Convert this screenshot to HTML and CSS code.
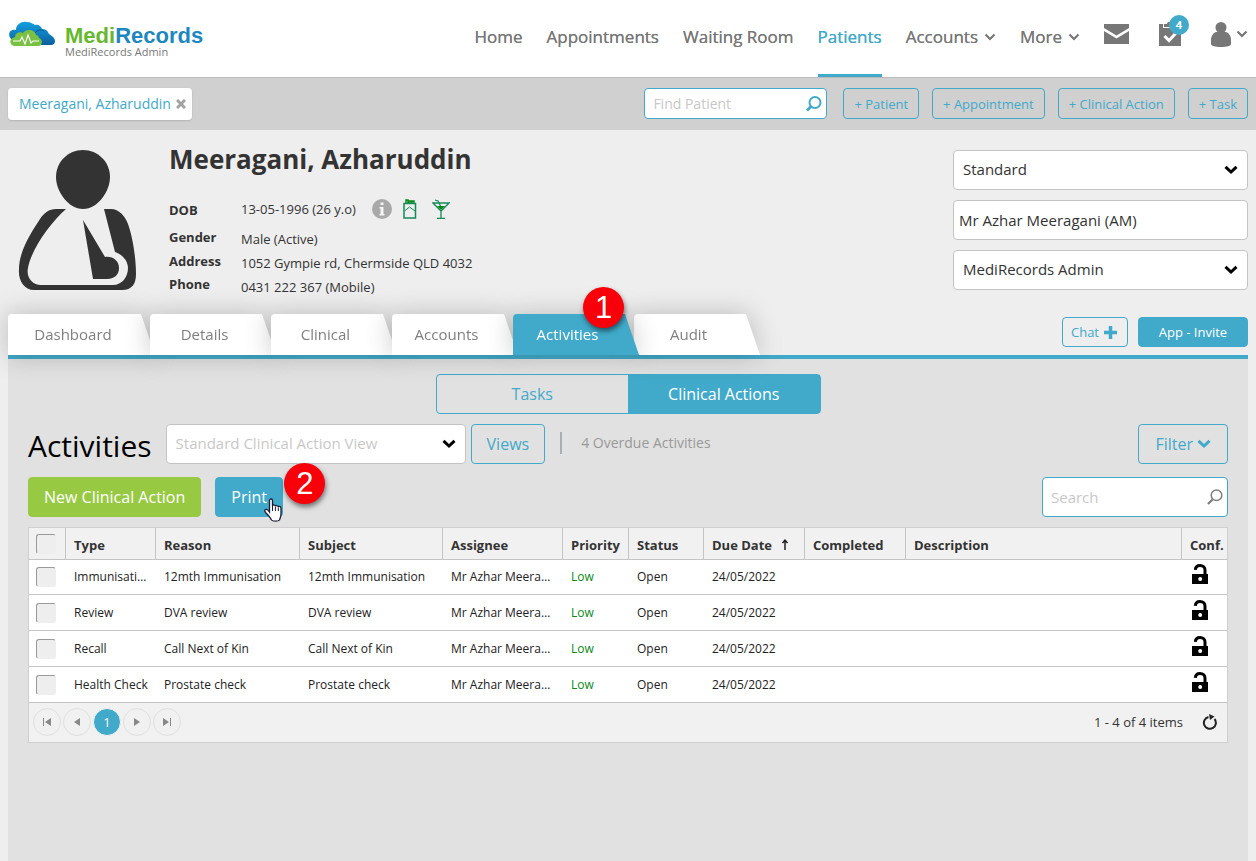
FILE: index.html
```html
<!DOCTYPE html>
<html lang="en">
<head>
<meta charset="utf-8">
<meta name="viewport" content="width=device-width, initial-scale=1">
<title>MediRecords - Patient activities</title>
<link rel="stylesheet" href="styles.css">
</head>
<body>
<svg class="defs" aria-hidden="true">
  <symbol id="chevron" viewBox="0 0 12 8"><path d="M1.5 1.5 6 6l4.500-4.500" fill="none" stroke="currentColor" stroke-width="2.200"/></symbol>
  <symbol id="chevron-bold" viewBox="0 0 14 10"><path d="M1.500 1.800 7 7l5.500-5.200" fill="none" stroke="currentColor" stroke-width="3"/></symbol>
  <symbol id="unlock" viewBox="0 0 16 20"><path d="M0 10h16v10H0z" fill="currentColor"/><path d="M3.300 5.800C3.500 3 5.200 1.500 8 1.500s5 1.600 5 4.500v5" fill="none" stroke="currentColor" stroke-width="3"/><circle cx="8.200" cy="15" r="2" fill="#fff"/></symbol>
</svg>

<header class="topbar">
  <a class="brand" href="#">
    <svg class="brand-mark" viewBox="0 0 48 26" aria-hidden="true">
      <defs>
        <linearGradient id="cloud-blue" x1="0" y1="0" x2="0" y2="1"><stop offset="0" stop-color="#139fe0"/><stop offset="1" stop-color="#0d5f9d"/></linearGradient>
      </defs>
      <path d="M3 18C-1 13 2 8 8 9 8 3 14 0 19 1c4 0 6 2 8 3 3-1 6 1 7 4 5 0 6 3 7 5 4 2 6 5 6 7 0 3-2 4-4 4H15z" fill="url(#cloud-blue)"/>
      <path d="M27 12c2-3 6-4 9-2" stroke="#0b4f8c" fill="none"/>
      <path d="M6 25c-5-1-5-8 1-9 0-4 5-6 8-4 4-5 12-3 13 2 1 0 3 1 3 3 4 1 4 8-1 8z" fill="#7ac043"/>
      <path d="M5 20h7l2-4 3 7 3-9 3 8 2-2h6" fill="none" stroke="#fff" stroke-width="1.100"/>
    </svg>
    <span class="brand-text">
      <span class="brand-name"><span class="brand-green">Medi</span>Records</span>
      <span class="brand-sub">MediRecords Admin</span>
    </span>
  </a>
  <nav class="nav" aria-label="Main">
    <a href="#">Home</a>
    <a href="#">Appointments</a>
    <a href="#">Waiting Room</a>
    <a class="active" href="#">Patients</a>
    <a href="#">Accounts <svg class="chev" aria-hidden="true"><use href="#chevron"/></svg></a>
    <a href="#">More <svg class="chev" aria-hidden="true"><use href="#chevron"/></svg></a>
    <a class="nav-mail" href="#" aria-label="Messages"><svg width="25" height="20" viewBox="0 0 25 20"><path d="M0 0h25v4l-12.500 7.500L0 4zM0 7l12.500 7.500L25 7v13H0z" fill="currentColor"/></svg></a>
    <a class="nav-tasks" href="#" aria-label="Tasks"><svg width="22" height="24" viewBox="0 0 22 24"><path d="M0 2h4v4h14V2h4v22H0z" fill="currentColor"/><path d="M5 5V2h3c0-3 6-3 6 0h3v3z" fill="currentColor"/><path d="m5.500 14 4.500 4.500 7-7.500" fill="none" stroke="#fff" stroke-width="3"/></svg><span class="count">4</span></a>
    <a class="nav-user" href="#" aria-label="Account"><svg width="20" height="25" viewBox="0 0 20 25"><circle cx="10" cy="5.500" r="5.500" fill="currentColor"/><path d="M5 10h10c3 1 5 4 5 8v4c0 2-4 3-10 3S0 24 0 22v-4c0-4 2-7 5-8z" fill="currentColor"/></svg><svg class="chev" aria-hidden="true"><use href="#chevron"/></svg></a>
  </nav>
</header>

<div class="toolbar">
  <div class="chip"><a href="#">Meeragani, Azharuddin</a><button type="button" aria-label="Close"><svg width="10" height="10" viewBox="0 0 10 10"><path d="m1 1 8 8M9 1 1 9" stroke="#a3a3a3" stroke-width="3"/></svg></button></div>
  <div class="toolbar-actions">
    <div class="field find"><input type="search" placeholder="Find Patient" aria-label="Find Patient"><svg width="16" height="16" viewBox="0 0 16 16" aria-hidden="true"><circle cx="9" cy="6.500" r="5.500" fill="none" stroke="currentColor" stroke-width="2"/><path d="m5 10.500-4 4" stroke="currentColor" stroke-width="3"/></svg></div>
    <button type="button" class="btn btn-small">+ Patient</button>
    <button type="button" class="btn btn-small">+ Appointment</button>
    <button type="button" class="btn btn-small">+ Clinical Action</button>
    <button type="button" class="btn btn-small">+ Task</button>
  </div>
</div>

<main>
  <section class="patient">
    <svg class="avatar" viewBox="0 0 120 142" role="img" aria-label="Patient">
      <g fill="#333">
        <path d="M65 0c15 0 27 12 27 27 0 14-12 32-27 32S38 41 38 27C38 12 50 0 65 0z"/>
        <path d="M48 59H38c-7 0-12 4-16 10C15 80 1 100 1 119c-1 11 5 21 15 21h88c10 0 14-6 14-16 0-15-3-36-8-50-3-8-9-15-17-15h-7l11 43c8 3 13 9 13 16 0 9-6 17-15 17H23c-9 0-15-8-13-17 3-18 22-45 38-59z"/>
        <path d="m65 70 22 37c8-1 14 4 14 11s-5 11-12 11H75z"/>
      </g>
    </svg>
    <div class="patient-info">
      <h1>Meeragani, Azharuddin</h1>
      <dl>
        <dt>DOB</dt>
        <dd class="dob">13-05-1996 (26 y.o)
          <svg class="ico-info" width="20" height="20" viewBox="0 0 20 20" aria-hidden="true"><circle cx="10" cy="10" r="10" fill="#a9a9a9"/><path d="M8.500 3.500h3v2.500h-3zM7.500 8h4v7h1v1.500h-5V15h1V9.500h-1z" fill="#f4f4f4"/></svg>
          <svg class="ico-smoke" width="14" height="20" viewBox="0 0 14 20" aria-hidden="true"><path d="M3 5V1h2v3m1 0V2h2v2m1 0V2h2v3" fill="none" stroke="#008a14" stroke-width="1.500"/><path d="M1 4.500h11.500V19H1z" fill="none" stroke="#148a5a" stroke-width="1.500"/><path d="m1.500 12 5-4 5.500 4" fill="none" stroke="#148a5a"/></svg>
          <svg class="ico-drink" width="18" height="20" viewBox="0 0 18 20" aria-hidden="true"><path d="M1 4h16L9 12zM9 11v8M5 19.500h8M3 1l3 1 3 6" fill="none" stroke="#148a5a" stroke-width="1.300"/><path d="M5 7h8l-4 4z" fill="#008a14"/></svg>
        </dd>
        <dt>Gender</dt><dd>Male (Active)</dd>
        <dt>Address</dt><dd>1052 Gympie rd, Chermside QLD 4032</dd>
        <dt>Phone</dt><dd>0431 222 367 (Mobile)</dd>
      </dl>
    </div>
    <div class="patient-side">
      <div class="select"><select aria-label="Billing type"><option>Standard</option></select><svg aria-hidden="true"><use href="#chevron-bold"/></svg></div>
      <input class="plain" type="text" value="Mr Azhar Meeragani (AM)" aria-label="Practitioner">
      <div class="select"><select aria-label="Practice"><option>MediRecords Admin</option></select><svg aria-hidden="true"><use href="#chevron-bold"/></svg></div>
    </div>
  </section>

  <div class="tabs-row">
    <nav class="tabs" aria-label="Patient record">
      <a class="tab tab-first" href="#"><span>Dashboard</span></a>
      <a class="tab" href="#"><span>Details</span></a>
      <a class="tab" href="#"><span>Clinical</span></a>
      <a class="tab" href="#"><span>Accounts</span></a>
      <div class="tab-holder">
        <a class="tab tab-active" href="#"><span>Activities</span></a>
        <b class="step step-one">1</b>
      </div>
      <a class="tab" href="#"><span>Audit</span></a>
    </nav>
    <div class="tabs-actions">
      <button type="button" class="btn btn-chat">Chat <svg width="13" height="13" viewBox="0 0 13 13" aria-hidden="true"><path d="M6.500 0v13M0 6.500h13" stroke="currentColor" stroke-width="3.500"/></svg></button>
      <button type="button" class="btn btn-fill btn-invite">App - Invite</button>
    </div>
  </div>

  <section class="panel">
    <div class="toggle">
      <button type="button">Tasks</button>
      <button type="button" class="on" aria-pressed="true">Clinical Actions</button>
    </div>

    <div class="row row-views">
      <h2>Activities</h2>
      <div class="select view-select"><select aria-label="View"><option>Standard Clinical Action View</option></select><svg aria-hidden="true"><use href="#chevron-bold"/></svg></div>
      <button type="button" class="btn btn-large btn-views">Views</button>
      <p class="overdue">4 Overdue Activities</p>
      <button type="button" class="btn btn-large btn-filter">Filter <svg aria-hidden="true"><use href="#chevron-bold"/></svg></button>
    </div>

    <div class="row row-actions">
      <button type="button" class="btn btn-large btn-green">New Clinical Action</button>
      <div class="print">
        <button type="button" class="btn btn-large btn-fill">Print</button>
        <svg class="cursor" width="18" height="24" viewBox="0 0 18 24" aria-hidden="true"><path d="M5.500 14V2.500c0-2 3-2 3 0V8c0-1.500 3-1.500 3 .5 0-1.500 2.800-1.300 2.800.7 0-1.300 2.700-1 2.700 1V16c0 3-1 4-1.500 6-1 1.500-7 1.500-8 0-1-2-2-3-4-5.500C1 14 0 12.500 1.500 11.500c1.500-.7 3 1 4 2.500z" fill="#fff" stroke="#1b1b33" stroke-width="1.300"/><path d="M8.500 8v5M11.400 9v4M14.300 9.500V13" stroke="#1b1b33"/></svg>
        <b class="step step-two">2</b>
      </div>
      <div class="field search"><input type="search" placeholder="Search" aria-label="Search"><svg width="16" height="16" viewBox="0 0 16 16" aria-hidden="true"><circle cx="9.500" cy="6.300" r="5.300" fill="none" stroke="currentColor" stroke-width="1.500"/><path d="m5.500 10.500-4.500 4.500" stroke="currentColor" stroke-width="2.300"/></svg></div>
    </div>

    <div class="grid">
      <table>
        <colgroup><col class="c-check"><col class="c-type"><col class="c-reason"><col class="c-subject"><col class="c-assignee"><col class="c-priority"><col class="c-status"><col class="c-date"><col class="c-date"><col><col class="c-conf"></colgroup>
        <thead>
          <tr><th><input type="checkbox" aria-label="Select all"></th><th>Type</th><th>Reason</th><th>Subject</th><th>Assignee</th><th>Priority</th><th>Status</th><th>Due Date <svg class="sort" width="8" height="11" viewBox="0 0 8 11" aria-hidden="true"><path d="M4 1v10M1.500 4 4 1.200 6.500 4" fill="none" stroke="#222" stroke-width="1.500"/></svg></th><th>Completed</th><th>Description</th><th>Conf.</th></tr>
        </thead>
        <tbody>
          <tr><td><input type="checkbox" aria-label="Select Immunisation"></td><td>Immunisation</td><td>12mth Immunisation</td><td>12mth Immunisation</td><td>Mr Azhar Meeragani</td><td class="low">Low</td><td>Open</td><td>24/05/2022</td><td></td><td></td><td><svg class="lock"><use href="#unlock"/></svg></td></tr>
          <tr><td><input type="checkbox" aria-label="Select Review"></td><td>Review</td><td>DVA review</td><td>DVA review</td><td>Mr Azhar Meeragani</td><td class="low">Low</td><td>Open</td><td>24/05/2022</td><td></td><td></td><td><svg class="lock"><use href="#unlock"/></svg></td></tr>
          <tr><td><input type="checkbox" aria-label="Select Recall"></td><td>Recall</td><td>Call Next of Kin</td><td>Call Next of Kin</td><td>Mr Azhar Meeragani</td><td class="low">Low</td><td>Open</td><td>24/05/2022</td><td></td><td></td><td><svg class="lock"><use href="#unlock"/></svg></td></tr>
          <tr><td><input type="checkbox" aria-label="Select Health Check"></td><td>Health Check</td><td>Prostate check</td><td>Prostate check</td><td>Mr Azhar Meeragani</td><td class="low">Low</td><td>Open</td><td>24/05/2022</td><td></td><td></td><td><svg class="lock"><use href="#unlock"/></svg></td></tr>
        </tbody>
      </table>
      <div class="pager">
        <button type="button" aria-label="First page"><svg viewBox="0 0 8 8"><path d="M.5 0v8" stroke="currentColor"/><path d="M8 0v8L2 4z" fill="currentColor"/></svg></button>
        <button type="button" aria-label="Previous page"><svg viewBox="0 0 8 8"><path d="M7 0v8L1 4z" fill="currentColor"/></svg></button>
        <button type="button" class="current">1</button>
        <button type="button" aria-label="Next page"><svg viewBox="0 0 8 8"><path d="M1 0v8l6-4z" fill="currentColor"/></svg></button>
        <button type="button" aria-label="Last page"><svg viewBox="0 0 8 8"><path d="M7.500 0v8" stroke="currentColor"/><path d="M0 0v8l6-4z" fill="currentColor"/></svg></button>
        <span class="pager-info">1 - 4 of 4 items</span>
        <button type="button" class="refresh" aria-label="Refresh"><svg viewBox="0 0 16 16"><path d="M6.500 3A6 6 0 1 0 12.500 5" fill="none" stroke="#222" stroke-width="2"/><path d="M7 0l5.500 2.500L8 6z" fill="#222"/></svg></button>
      </div>
    </div>
  </section>
</main>
</body>
</html>
```

FILE: styles.css
```css
:root {
  --blue: #41a9c9;
  --line: #c4c4c4;
  --grey: #7f7f7f;
}

* { box-sizing: border-box; }

body {
  margin: 0;
  min-height: 100vh;
  display: flex;
  flex-direction: column;
  background: #eee;
  color: #333;
  font: 13px/20px "Open Sans", sans-serif;
}

a { color: inherit; text-decoration: none; }
button, input, select { font: inherit; color: inherit; }
button { cursor: pointer; }
input::placeholder { color: #c8c8c8; opacity: 1; }
input[type="search"] { appearance: none; }
h1, h2, p, dl, dd { margin: 0; }
.defs { display: none; }
svg { flex: none; }

/* Top bar */
.topbar {
  display: flex;
  justify-content: space-between;
  height: 78px;
  padding: 0 8px;
  background: #fff;
  border-bottom: 1px solid #bababa;
}
.brand { display: flex; align-items: flex-start; gap: 9px; padding-top: 21px; }
.brand-mark { width: 48px; height: 26px; }
.brand-text { display: flex; flex-direction: column; padding-top: 5px; }
.brand-name { font: bold 22px/20px "Liberation Sans", sans-serif; color: #1e87c0; }
.brand-green { color: #66b82e; }
.brand-sub { font-size: 11px; line-height: 12px; color: #777; }

.nav { display: flex; gap: 24px; font-size: 17px; text-shadow: 0 0 0 currentColor; color: #777; }
.nav a { display: flex; align-items: center; gap: 6px; height: 77px; border-bottom: 3px solid transparent; }
.nav a.active { color: var(--blue); border-color: var(--blue); }
.chev { width: 12px; height: 8px; }
.nav .nav-mail { padding-bottom: 6px; }
.nav .nav-tasks { position: relative; margin-left: 6px; padding-bottom: 6px; }
.nav .nav-user { margin-left: 6px; gap: 5px; padding-bottom: 6px; }
.count {
  position: absolute;
  left: 10px;
  top: 15px;
  width: 20px;
  height: 20px;
  border-radius: 50%;
  background: var(--blue);
  color: #fff;
  font-size: 11px;
  font-weight: 600;
  line-height: 20px;
  text-align: center;
}

/* Toolbar */
.toolbar {
  display: flex;
  justify-content: space-between;
  align-items: flex-start;
  height: 52px;
  padding: 10px 8px;
  background: #d0d0d0;
}
.chip {
  display: flex;
  align-items: center;
  gap: 5px;
  height: 32px;
  padding: 0 6px 0 11px;
  border-radius: 4px;
  background: #fff;
  box-shadow: 0 1px 2px rgba(0, 0, 0, .15);
  color: var(--blue);
  font-size: 14px;
}
.chip button { display: flex; padding: 0; border: 0; background: none; }
.toolbar-actions { display: flex; gap: 13px; }

.btn {
  display: flex;
  align-items: center;
  justify-content: center;
  border: 1px solid var(--blue);
  border-radius: 4px;
  background: none;
  color: var(--blue);
  white-space: nowrap;
}
.btn-small { height: 31px; padding: 0 10px; }
.btn-large { height: 40px; padding: 0 15px; font-size: 16px; }
.btn-fill { background: var(--blue); color: #fff; }
.btn-green { background: #98c943; border-color: #98c943; color: #fff; }

.field { position: relative; }
.field input {
  width: 100%;
  height: 100%;
  padding: 0 32px 0 8px;
  border: 1px solid var(--blue);
  border-radius: 4px;
  background: #fff;
}
.field svg { position: absolute; right: 5px; top: 50%; translate: 0 -50%; }
.find { width: 183px; height: 31px; margin-right: 3px; font-size: 14px; color: var(--blue); }

/* Patient summary */
main { flex: 1; display: flex; flex-direction: column; padding: 0 8px; }
.patient { display: flex; height: 184px; }
.avatar { width: 120px; height: 142px; margin: 20px 0 0 10px; }
.patient-info { flex: 1; padding: 11px 0 0 31px; }
h1 { font-size: 26px; font-weight: 700; line-height: 36px; }
dl { display: grid; grid-template-columns: 72px 1fr; grid-template-rows: 36px 24px 24px 23px; margin-top: 14px; }
dt, dd { display: flex; align-items: center; }
dt { font-weight: 700; padding-bottom: 5px; }
dt:first-child { padding: 2px 0 0; }
.dob { padding-bottom: 1px; }
.ico-info { margin-left: 16px; }
.ico-smoke { margin-left: 11px; }
.ico-drink { margin-left: 15px; }

.patient-side { width: 295px; display: flex; flex-direction: column; gap: 10px; padding-top: 20px; font-size: 15px; }
.select { position: relative; height: 40px; }
.select select, .plain {
  width: 100%;
  height: 40px;
  padding: 0 30px 2px 9px;
  border: 1px solid var(--line);
  border-radius: 4px;
  background: #fff;
  appearance: none;
}
.plain { padding: 0 5px; }
.select svg { position: absolute; right: 10px; top: 15px; width: 14px; height: 10px; color: #000; pointer-events: none; }

/* Tabs */
.tabs-row { position: relative; display: flex; justify-content: space-between; height: 41px; }
.tabs { display: flex; font-size: 15px; color: var(--grey); isolation: isolate; }
.tab, .tab-holder { width: 126px; margin-right: -5px; }
.tab { display: block; height: 41px; filter: drop-shadow(0 0 13px rgba(0, 0, 0, .22)); }
.tab span {
  display: block;
  padding-right: 17px;
  border-radius: 4px 0 0 0;
  background: #fff;
  clip-path: polygon(0 0, calc(100% - 14px) 0, 100% 100%, 0 100%);
  line-height: 41px;
  text-align: center;
}
.tab-first { width: 147px; }
.tab-holder { position: relative; z-index: 1; }
.tab-active { margin: 0; color: #fff; }
.tab-active span { background: var(--blue); }
.tabs-actions { display: flex; gap: 10px; padding-top: 3px; }
.btn-chat { height: 30px; padding: 0 10px 0 8px; gap: 5px; }
.btn-invite { width: 110px; height: 30px; }

/* Numbered callouts */
.step {
  position: absolute;
  width: 41px;
  height: 41px;
  border-radius: 50%;
  background: #f8000a;
  box-shadow: 1px 3px 5px rgba(0, 0, 0, .5);
  color: #fff;
  font: 31px/41px "Liberation Sans", sans-serif;
  text-align: center;
  pointer-events: none;
}
.step-one { left: 70px; top: -27px; }
.step-two { left: 69px; top: -14px; }

/* Activities panel */
.panel { flex: 1; padding: 15px 20px 20px; border-top: 4px solid var(--blue); background: #e1e1e1; }
.toggle { display: flex; width: 385px; height: 40px; margin: 0 auto 10px; border: 1px solid var(--blue); border-radius: 4px; }
.toggle button { flex: 1; padding: 0; border: 0; background: none; color: var(--blue); font-size: 16px; }
.toggle .on { background: var(--blue); color: #fff; }
.row { display: flex; height: 40px; }
h2 { margin-right: 14px; font-size: 30px; font-weight: 400; line-height: 44px; color: #000; }
.view-select { width: 300px; font-size: 15px; color: #c8c8c8; }
.btn-views { margin-left: 5px; }
.overdue { height: 22px; margin: 8px 0 0 15px; padding-left: 19px; border-left: 2px solid #a9adb6; color: #999; font-size: 14px; line-height: 22px; }
.btn-filter { margin-left: auto; gap: 4px; padding: 0 16px; }
.btn-filter svg { width: 14px; height: 10px; }
.row-actions { margin-top: 13px; }
.print { position: relative; margin-left: 14px; }
.cursor { position: absolute; left: 49px; top: 21px; }
.search { width: 186px; margin-left: auto; font-size: 15px; color: var(--grey); }

/* Data grid */
.grid { margin-top: 10px; border: 1px solid #cfcfcf; background: #f1f1f1; }
table { width: 100%; table-layout: fixed; border-collapse: separate; border-spacing: 0; }
th, td { padding: 0 8px; border-bottom: 1px solid var(--line); text-align: left; white-space: nowrap; overflow: hidden; text-overflow: ellipsis; }
th { height: 32px; padding-top: 3px; border-right: 1px solid var(--line); font-weight: 700; }
th:last-child { border-right: 0; padding-right: 0; }
td { height: 36px; background: #fff; color: #222; font-size: 12px; }
tbody tr:first-child td { height: 35px; }
th:first-child, td:first-child { padding: 0 0 0 7px; }
.c-check { width: 37px; }
.c-type { width: 90px; }
.c-reason { width: 144px; }
.c-subject { width: 143px; }
.c-assignee { width: 120px; }
.c-priority { width: 66px; }
.c-status { width: 75px; }
.c-date { width: 101px; }
.c-conf { width: 45px; }
.low { color: #0a8a1a; }
.sort { margin-left: 6px; }
.lock { display: block; width: 16px; height: 20px; margin: 0 0 6px 2px; color: #000; }
input[type="checkbox"] {
  appearance: none;
  display: block;
  width: 20px;
  height: 20px;
  margin: 0;
  border: 1px solid #eee;
  border-color: #999 #eee #eee #999;
  border-radius: 3px;
  background: #eee;
}

.pager { display: flex; align-items: center; gap: 2px; height: 39px; padding: 0 9px 2px 4px; }
.pager button { display: flex; align-items: center; justify-content: center; width: 28px; height: 28px; padding: 0; border: 1px solid #e0e0e0; border-radius: 50%; background: none; color: #888; }
.pager button svg { width: 8px; height: 8px; }
.pager .current { background: var(--blue); border-color: #f1f1f1; color: #fff; }
.pager-info { margin-left: auto; }
.pager .refresh { width: 16px; height: 16px; margin-left: 17px; border: 0; }
.pager .refresh svg { width: 16px; height: 16px; }
```
